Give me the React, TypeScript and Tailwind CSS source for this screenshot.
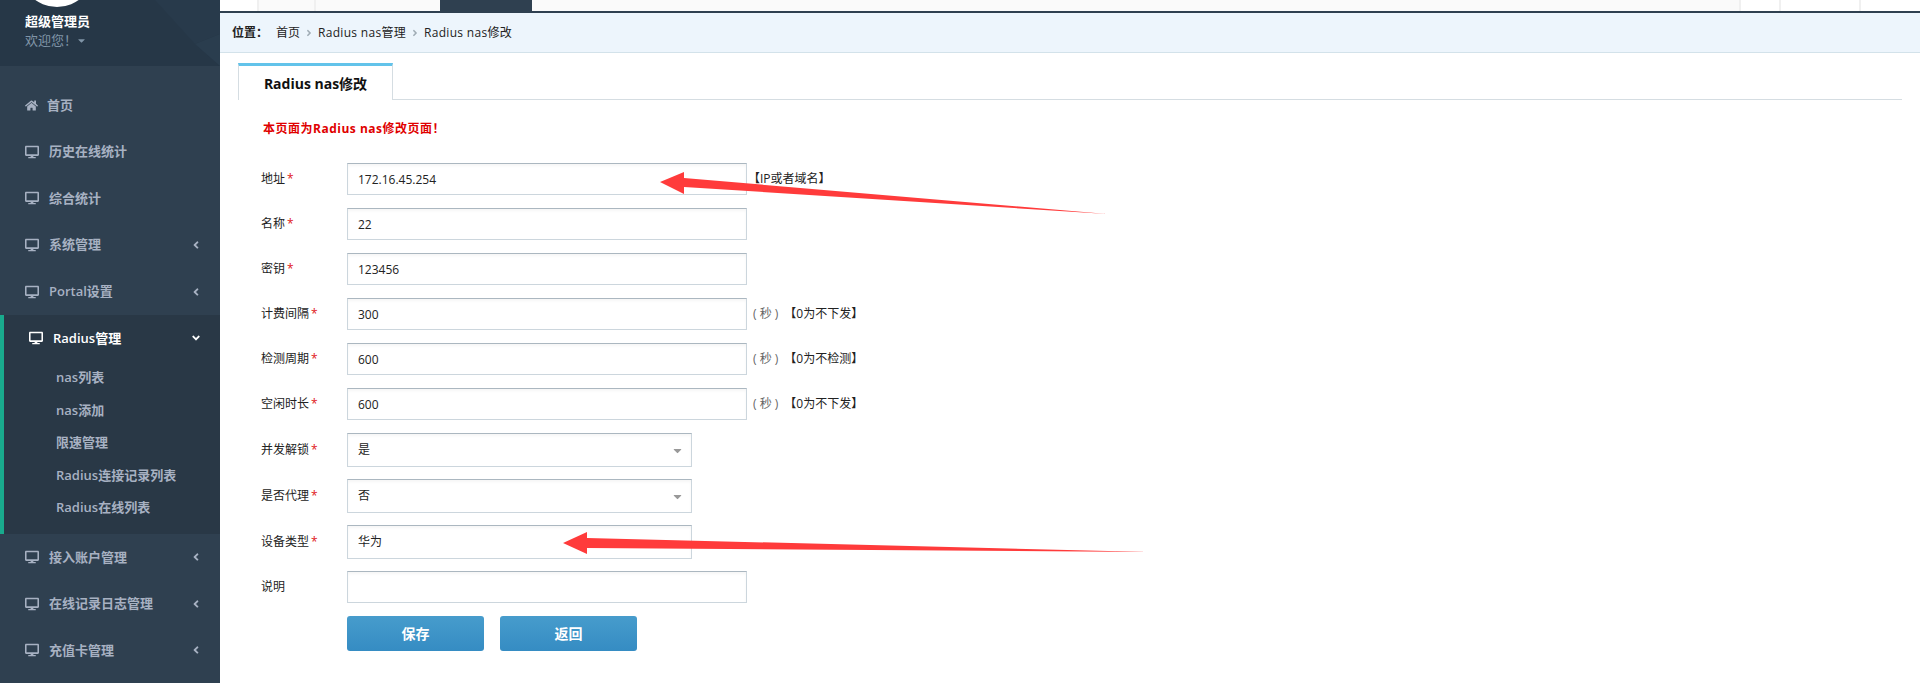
import type { ReactNode } from "react";
import { FaAngleDown, FaAngleLeft, FaAngleRight, FaCaretDown, FaDesktop, FaHome } from "react-icons/fa";

const font = "font-['Open_Sans','Noto_Sans_CJK_SC',sans-serif]";

const NavItem = ({ label, arrow = true, home = false }: { label: string; arrow?: boolean; home?: boolean }) => (
  <div className="h-[46.6px] flex items-center pl-[25px] pr-[18px] text-[#a7b1c2] text-[13px] font-semibold">
    <span className="w-[24px] shrink-0">{home ? <FaHome className="text-[13px]" /> : <FaDesktop className="text-[14px]" />}</span>
    <span className={home ? "-ml-[2px]" : ""}>{label}</span>
    {arrow && <FaAngleLeft className="ml-auto text-[12px]" />}
  </div>
);

const SubItem = ({ label }: { label: string }) => (
  <div className="h-[32.5px] flex items-center pl-[52px] text-[#a7b1c2] text-[13px] font-semibold">{label}</div>
);

const Label = ({ text, required = true }: { text: string; required?: boolean }) => (
  <label className="w-[86px] shrink-0 text-[12px] text-[#222]">
    {text}
    {required && <span className="ml-[2px] text-[#e01818]">*</span>}
  </label>
);

const fieldClass =
  "border border-[#ccd6dd] border-t-[#abb7c0] bg-white px-[10px] text-[12px] text-[#222] outline-none shadow-[inset_0_2px_3px_rgba(0,0,0,0.04)]";

const InputRow = ({ label, value, hint, required = true }: { label: string; value: string; hint?: ReactNode; required?: boolean }) => (
  <div className="flex items-center h-[32px] mb-[13px]">
    <Label text={label} required={required} />
    <input readOnly defaultValue={value} className={`${fieldClass} w-[400px] h-[32px]`} />
    {hint}
  </div>
);

const SecondsHint = ({ text }: { text: string }) => (
  <span className="ml-[6px] text-[12px] text-[#222] whitespace-nowrap">
    <span className="text-[#666]">( 秒 )</span>
    <span className="ml-[6px]">{text}</span>
  </span>
);

const SelectRow = ({ label, value, caret = true }: { label: string; value: string; caret?: boolean }) => (
  <div className="flex items-center h-[34px] mb-[12px]">
    <Label text={label} />
    <div className="relative">
      <select defaultValue={value} className={`${fieldClass} w-[345px] h-[34px] appearance-none block`}>
        <option>{value}</option>
      </select>
      {caret && <FaCaretDown className="absolute right-[8px] top-[11px] text-[13px] text-[#999] pointer-events-none" />}
    </div>
  </div>
);

const Button = ({ text }: { text: string }) => (
  <button className="w-[137px] h-[35px] rounded-[3px] bg-gradient-to-b from-[#479ccc] to-[#358cc3] text-white text-[14px] font-semibold">
    {text}
  </button>
);

const Sep = () => <FaAngleRight className="mx-[4px] text-[10px] text-[#a0acb5]" />;

export default function App() {
  return (
    <div className={`${font} relative flex h-[683px] w-[1920px] overflow-hidden bg-white`}>
      <aside className="w-[220px] shrink-0 bg-[#2f4050] flex flex-col">
        <div className="relative h-[66px] shrink-0 overflow-hidden bg-[#263747]">
          <svg className="absolute inset-0" width="220" height="66" viewBox="0 0 220 66">
            <polygon points="155,0 220,0 220,34 195,44" fill="#283a4b" />
            <polygon points="195,44 220,34 220,66" fill="#2a3d4e" />
          </svg>
          <div className="relative">
            <div className="w-[74px] h-[74px] -mt-[67px] ml-[20px] rounded-full bg-white" />
            <div className="pl-[25px] mt-[5px] text-white text-[13px] font-semibold leading-[18px]">超级管理员</div>
            <div className="pl-[25px] mt-[1px] flex items-center text-[#8095a8] text-[13px] leading-[18px]">
              欢迎您！<FaCaretDown className="text-[11px] -ml-[1px]" />
            </div>
          </div>
        </div>
        <nav className="pt-[16px]">
          <NavItem label="首页" arrow={false} home />
          <NavItem label="历史在线统计" arrow={false} />
          <NavItem label="综合统计" arrow={false} />
          <NavItem label="系统管理" />
          <NavItem label="Portal设置" />
          <div className="h-[219px] bg-[#293846] border-l-4 border-[#19aa8d]">
            <div className="h-[46.6px] flex items-center pl-[25px] pr-[18px] text-white text-[13px] font-semibold">
              <span className="w-[24px] shrink-0"><FaDesktop className="text-[14px]" /></span>
              <span>Radius管理</span>
              <FaAngleDown className="ml-auto text-[12px]" />
            </div>
            <SubItem label="nas列表" />
            <SubItem label="nas添加" />
            <SubItem label="限速管理" />
            <SubItem label="Radius连接记录列表" />
            <SubItem label="Radius在线列表" />
          </div>
          <NavItem label="接入账户管理" />
          <NavItem label="在线记录日志管理" />
          <NavItem label="充值卡管理" />
        </nav>
      </aside>

      <main className="flex-1 min-w-0 flex flex-col">
        <div className="h-[13px] shrink-0 border-b-2 border-[#2f4050] flex bg-[#fafafa]">
          <div className="w-[39px] bg-white border-r-2 border-[#f0f0f0]" />
          <div className="w-[57px] border-r-2 border-[#f0f0f0]" />
          <div className="w-[124px]" />
          <div className="w-[92px] bg-[#2f4050]" />
          <div className="w-[1207px]" />
          <div className="w-[40px] bg-white border-l-2 border-[#f0f0f0]" />
          <div className="w-[80px] bg-white border-l-2 border-[#f0f0f0]" />
          <div className="flex-1 bg-white border-l-2 border-[#f0f0f0]" />
        </div>

        <div className="h-[40px] shrink-0 bg-[#edf5fc] border-b border-[#d3e2ea] flex items-center pl-[12px] text-[12px] text-[#222]">
          <span className="font-bold mr-[8px]">位置：</span>
          <span>首页</span>
          <Sep />
          <span className="tracking-[0.3px]">Radius nas管理</span>
          <Sep />
          <span className="tracking-[0.3px]">Radius nas修改</span>
        </div>

        <div className="mt-[10px] ml-[18px] mr-[18px] h-[37px] shrink-0 border-b border-[#d5dde2] flex">
          <div className="w-[155px] h-[37px] bg-white border-t-[3px] border-[#62c3ea] border-x border-x-[#d5dde2] flex items-center justify-center text-[14px] font-bold text-[#111]">
            Radius nas修改
          </div>
        </div>

        <div className="pl-[43px] pt-[21px] text-[12px] font-bold tracking-[0.5px] text-[#e00000] leading-[16px]">本页面为Radius nas修改页面！</div>

        <form className="pl-[41px] pt-[26px]">
          <InputRow label="地址" value="172.16.45.254" hint={<span className="ml-[1px] text-[12px] text-[#222] whitespace-nowrap">【IP或者域名】</span>} />
          <InputRow label="名称" value="22" />
          <InputRow label="密钥" value="123456" />
          <InputRow label="计费间隔" value="300" hint={<SecondsHint text="【0为不下发】" />} />
          <InputRow label="检测周期" value="600" hint={<SecondsHint text="【0为不检测】" />} />
          <InputRow label="空闲时长" value="600" hint={<SecondsHint text="【0为不下发】" />} />
          <SelectRow label="并发解锁" value="是" />
          <SelectRow label="是否代理" value="否" />
          <SelectRow label="设备类型" value="华为" caret={false} />
          <InputRow label="说明" value="" required={false} />
          <div className="flex gap-[16px] pl-[86px]">
            <Button text="保存" />
            <Button text="返回" />
          </div>
        </form>
      </main>

      <svg className="absolute left-0 top-0 pointer-events-none" width="1920" height="683" viewBox="0 0 1920 683">
        <polygon points="660,182 684,172 684,178 1107,214 684,187 684,194" fill="#ff3b3b" />
        <polygon points="563,543 587,532 587,538 1149,552 587,548 587,554" fill="#ff3b3b" />
      </svg>
    </div>
  );
}
